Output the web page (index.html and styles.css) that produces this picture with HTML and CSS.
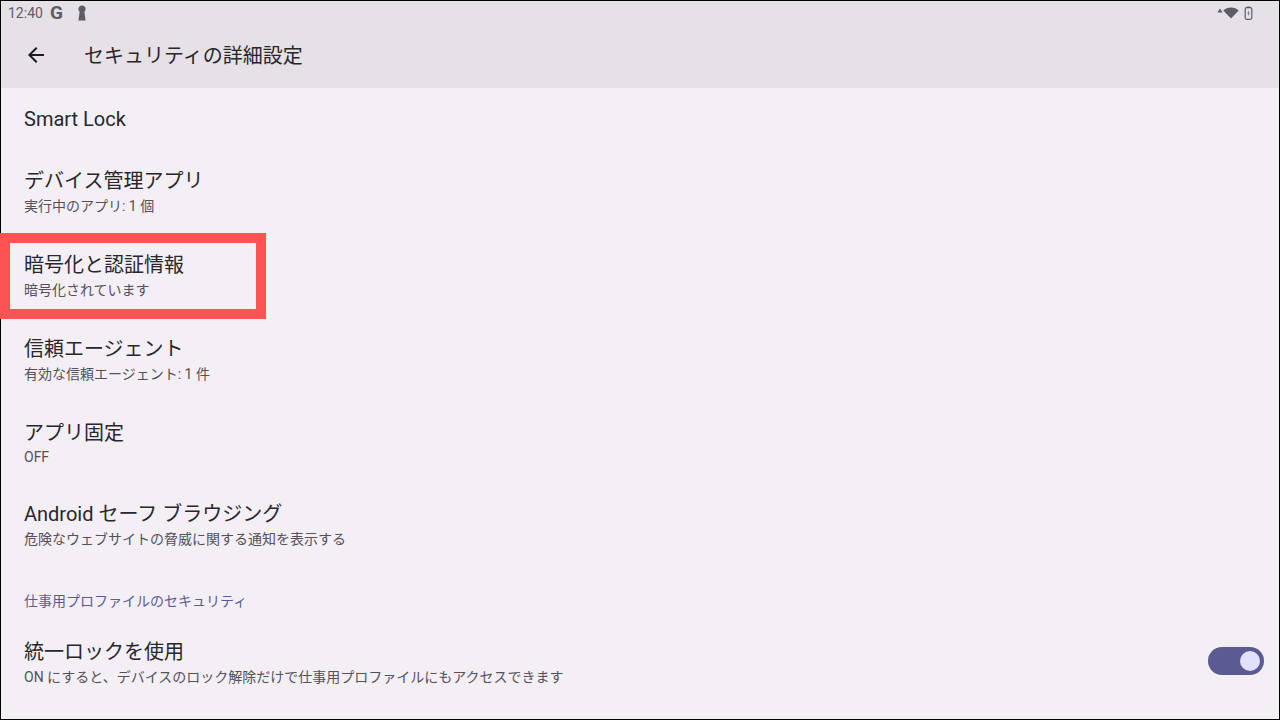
FILE: index.html
```html
<!DOCTYPE html>
<html lang="ja">
<head>
    <meta charset="UTF-8">
    <title>セキュリティの詳細設定</title>
    <link rel="stylesheet" href="styles.css">
</head>
<body>
<div class="screen">
    <div class="appbar">
        <div class="status">
            <span class="time">12:40</span>
            <span class="g">G</span>
            <svg class="key" width="10" height="16" viewBox="0 0 10 16"><path d="M5 0.500a3.600 3.600 0 0 1 2.400 6.300L8.600 15.500H1.400L2.600 6.800A3.600 3.600 0 0 1 5 0.500z" fill="#5f5d62"/></svg>
            <span class="spacer"></span>
            <svg class="tri" width="6" height="5" viewBox="0 0 6 5"><path d="M3 0.500L5.600 4.500H0.400z" fill="#5f5d62"/></svg>
            <svg class="wifi" width="16" height="12" viewBox="0 0 16 12"><path d="M8 11.500L0.300 3.400C2.400 1.400 5 0.400 8 0.400s5.600 1 7.700 3z" fill="#5f5d62"/></svg>
            <svg class="batt" width="9" height="14" viewBox="0 0 9 14"><rect x="1.200" y="1.700" width="6.600" height="11.600" rx="1.500" fill="none" stroke="#5f5d62" stroke-width="1.200"/><rect x="3" y="0.500" width="3" height="1.500" fill="#5f5d62"/><path d="M4.800 4L3.400 7.600H4.500L4.200 10.500L5.700 6.800H4.600z" fill="#5f5d62"/></svg>
        </div>
        <div class="toolbar">
            <svg class="back" width="24" height="24" viewBox="0 0 24 24"><path d="M20 11H7.830l5.590-5.590L12 4l-8 8 8 8 1.410-1.410L7.830 13H20z" fill="#1d1b20"/></svg>
            <h1>セキュリティの詳細設定</h1>
        </div>
    </div>
    <ul class="list">
        <li class="row row-single"><div class="title">Smart Lock</div></li>
        <li class="row row-a"><div class="title">デバイス管理アプリ</div><div class="sub">実行中のアプリ: 1 個</div></li>
        <li class="row row-b"><div class="title">暗号化と認証情報</div><div class="sub">暗号化されています</div></li>
        <li class="row row-c"><div class="title">信頼エージェント</div><div class="sub">有効な信頼エージェント: 1 件</div></li>
        <li class="row row-d"><div class="title">アプリ固定</div><div class="sub">OFF</div></li>
        <li class="row row-e"><div class="title">Android セーフ ブラウジング</div><div class="sub">危険なウェブサイトの脅威に関する通知を表示する</div></li>
        <li class="category">仕事用プロファイルのセキュリティ</li>
        <li class="row row-switch">
            <div class="text">
                <div class="title">統一ロックを使用</div>
                <div class="sub">ON にすると、デバイスのロック解除だけで仕事用プロファイルにもアクセスできます</div>
            </div>
            <div class="switch"><div class="thumb"></div></div>
        </li>
    </ul>
    <div class="highlight"></div>
</div>
</body>
</html>
```

FILE: styles.css
```css
html,body,ul,li,h1{margin:0;padding:0}
ul{list-style:none}
body{
    width:1280px;
    height:720px;
    overflow:hidden;
    font-family:Roboto,"Noto Sans CJK JP",sans-serif;
}

.screen{
    position:relative;
    box-sizing:border-box;
    width:1280px;
    height:720px;
    border:1px solid #000;
    background:#f3eff5;
}

/* header */
.appbar{
    height:87px;
    background:#e5e1e7;
}
.status{
    display:flex;
    align-items:center;
    height:24px;
    padding:0 26px 0 7px;
    color:#5f5d62;
}
.time{font-size:14px;line-height:24px}
.g{margin-left:7px;font-size:19px;font-weight:700;line-height:24px}
.key{margin-left:14px}
.spacer{flex:1}
.tri{margin-bottom:6px}
.batt{margin-left:5px}
.toolbar{
    display:flex;
    align-items:center;
    height:60px;
    padding-left:23px;
}
.back{flex:none}
.toolbar h1{
    margin-left:36px;
    padding-top:2px;
    font-size:20px;
    font-weight:400;
    line-height:28px;
    color:#29272c;
}

/* rows */
.row{padding-left:23px;box-sizing:border-box}
.title{font-size:20px;line-height:28px;color:#29272c}
.sub{font-size:14px;line-height:20px;color:#54515a;margin-top:1px}
.row-single{height:61px;padding-top:17px}
.row-a{height:85px;padding-top:18px}
.row-b{height:83px;padding-top:17px}
.row-c{height:84px;padding-top:18px}
.row-d{height:81px;padding-top:18px}
.row-d .sub{margin-top:0}
.row-e{height:88px;padding-top:18px}
.category{
    height:47px;
    padding:21px 0 0 23px;
    font-size:14px;
    line-height:20px;
    color:#5b5b95;
}
.row-switch{
    display:flex;
    align-items:center;
    justify-content:space-between;
    padding-right:15px;
}
.switch{
    display:flex;
    align-items:center;
    justify-content:flex-end;
    box-sizing:border-box;
    width:56px;
    height:28px;
    margin-bottom:4px;
    padding-right:4px;
    border-radius:14px;
    background:#5b5a92;
}
.thumb{
    width:20px;
    height:20px;
    border-radius:50%;
    background:#e1e0ff;
}

/* annotation */
.highlight{
    position:absolute;
    left:-1px;
    top:232px;
    width:246px;
    height:66px;
    border:10px solid #ff5252;
}
```
